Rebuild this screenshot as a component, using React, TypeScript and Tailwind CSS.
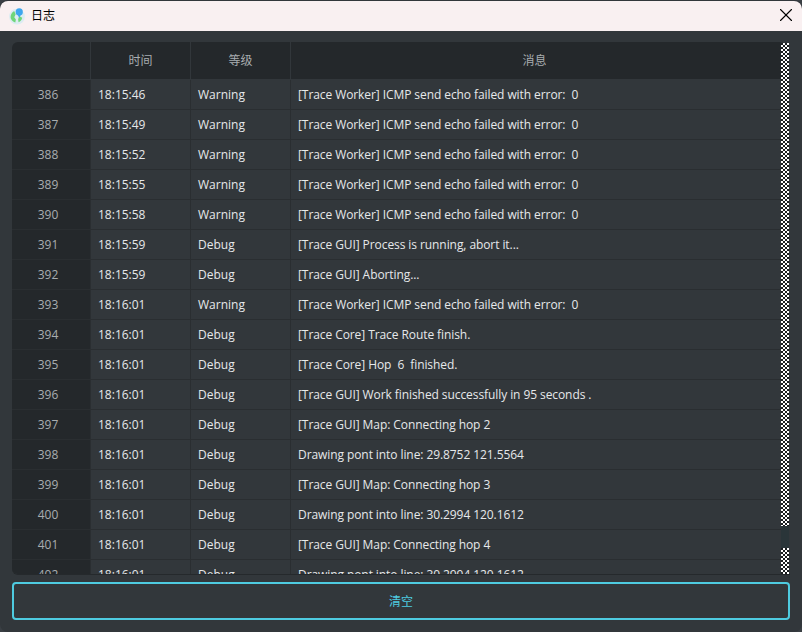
import React from 'react';
import { X } from 'lucide-react';

const rows = [
  ['386', '18:15:46', 'Warning', '[Trace Worker] ICMP send echo failed with error:  0'],
  ['387', '18:15:49', 'Warning', '[Trace Worker] ICMP send echo failed with error:  0'],
  ['388', '18:15:52', 'Warning', '[Trace Worker] ICMP send echo failed with error:  0'],
  ['389', '18:15:55', 'Warning', '[Trace Worker] ICMP send echo failed with error:  0'],
  ['390', '18:15:58', 'Warning', '[Trace Worker] ICMP send echo failed with error:  0'],
  ['391', '18:15:59', 'Debug', '[Trace GUI] Process is running, abort it...'],
  ['392', '18:15:59', 'Debug', '[Trace GUI] Aborting...'],
  ['393', '18:16:01', 'Warning', '[Trace Worker] ICMP send echo failed with error:  0'],
  ['394', '18:16:01', 'Debug', '[Trace Core] Trace Route finish.'],
  ['395', '18:16:01', 'Debug', '[Trace Core] Hop  6  finished.'],
  ['396', '18:16:01', 'Debug', '[Trace GUI] Work finished successfully in 95 seconds .'],
  ['397', '18:16:01', 'Debug', '[Trace GUI] Map: Connecting hop 2'],
  ['398', '18:16:01', 'Debug', 'Drawing pont into line: 29.8752 121.5564'],
  ['399', '18:16:01', 'Debug', '[Trace GUI] Map: Connecting hop 3'],
  ['400', '18:16:01', 'Debug', 'Drawing pont into line: 30.2994 120.1612'],
  ['401', '18:16:01', 'Debug', '[Trace GUI] Map: Connecting hop 4'],
  ['402', '18:16:01', 'Debug', 'Drawing pont into line: 30.2994 120.1612'],
];

const checker =
  'bg-[repeating-conic-gradient(#ffffff_0_25%,#1a1d1f_0_50%)] bg-[length:4px_4px]';

const AppLogo = () => (
  <svg width="18" height="18" viewBox="0 0 16 16" className="mb-px shrink-0">
    <circle cx="8" cy="8.5" r="7" fill="#dcecf2" />
    <path d="M5.5 3.5 C3 5 1.8 8 2.6 10.5 C3.6 12.5 5 13.6 6.5 13.8 L7 11 L5.6 9.2 L6.8 6.5 Z" fill="#6fd67a" />
    <path d="M10 8 L12.6 9.6 C12.4 11.6 11 13 9.4 13.6 L9 10.8 Z" fill="#6fd67a" />
    <circle cx="10" cy="4.4" r="3.2" fill="#3ea6ee" />
    <path d="M8.4 6.6 L11.6 6.6 L10 9.6 Z" fill="#3ea6ee" />
  </svg>
);

export default function App() {
  return (
    <div className="h-[632px] w-[802px] overflow-hidden bg-[#3a3f44] font-['Open_Sans','Noto_Sans_CJK_SC',sans-serif]">
      <div className="flex h-[632px] w-[802px] flex-col overflow-hidden rounded-lg bg-[#32373b]">
        <div className="mt-px flex h-[30px] shrink-0 items-center justify-between rounded-t-lg bg-[#f9f0f1] pl-[8px] pr-[5px]">
          <div className="flex items-center gap-[5px]">
            <AppLogo />
            <span className="mb-[2px] font-['Noto_Sans_CJK_SC',sans-serif] text-[12px] text-black">日志</span>
          </div>
          <X size={22} strokeWidth={1.2} className="mb-[2px] text-black" />
        </div>

        <div className="ml-[12px] mt-[11px] flex h-[533px] w-[778px] overflow-hidden rounded-bl-md rounded-tl-md border-b border-[#25292c]">
          <div className="w-[769px] shrink-0 overflow-hidden">
            <div className="flex h-[38px] border-b border-[#32373b] bg-[#24282b] text-[12px] text-[#a8adb0]">
              <div className="w-[79px] shrink-0 border-r border-[#32373b]" />
              <div className="flex w-[100px] shrink-0 items-center justify-center border-r border-[#32373b] pt-px">时间</div>
              <div className="flex w-[100px] shrink-0 items-center justify-center border-r border-[#32373b] pt-px">等级</div>
              <div className="flex flex-1 items-center justify-center pr-[3px] pt-px">消息</div>
            </div>
            {rows.map((r) => (
              <div key={r[0]} className="flex h-[30px] border-b border-[#2a2e31] text-[12px]">
                <div className="flex w-[78px] shrink-0 items-center justify-center bg-[#24282b] pr-[6px] pt-px text-[#a8adb0]">{r[0]}</div>
                <div className="flex w-[101px] shrink-0 items-center border-l border-r border-[#2a2e31] pl-[7px] pt-px text-[#e6e8ea]">{r[1]}</div>
                <div className="flex w-[100px] shrink-0 items-center border-r border-[#2a2e31] pl-[7px] pt-px text-[#e6e8ea]">{r[2]}</div>
                <div className="flex flex-1 items-center whitespace-pre pl-[7px] pt-px tracking-[-0.08px] text-[#e6e8ea]">{r[3]}</div>
              </div>
            ))}
          </div>
          <div className="flex w-[8px] shrink-0 flex-col pt-px">
            <div className={`h-[483px] ${checker}`} />
            <div className="h-[22px] bg-[#2a3539]" />
            <div className={`flex-1 ${checker}`} />
          </div>
        </div>

        <button className="ml-[12px] mt-[7px] h-[38px] w-[778px] rounded-[4px] border-2 border-[#4ecbe0] pt-[2px] text-[12px] text-[#4ecbe0]">
          清空
        </button>
      </div>
    </div>
  );
}
